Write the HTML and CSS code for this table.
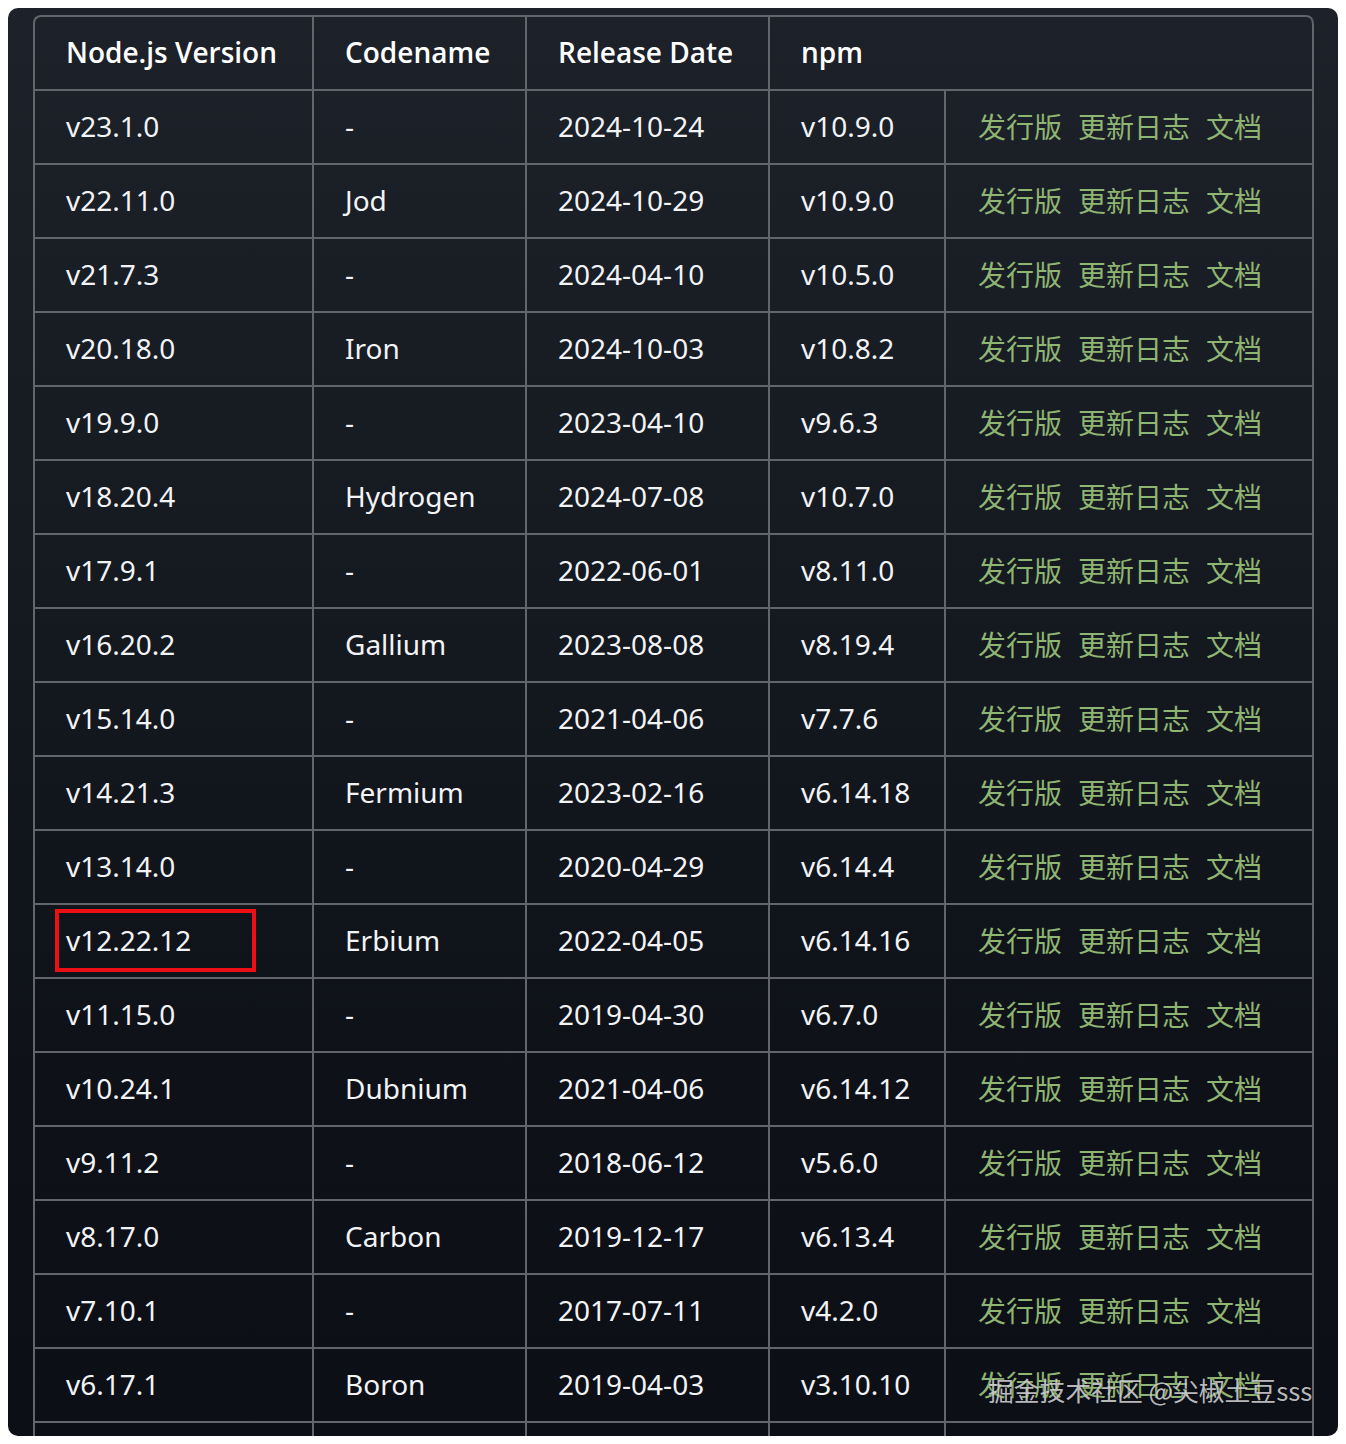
FILE: index.html
```html
<!DOCTYPE html>
<html lang="zh">
<head>
<meta charset="utf-8">
<title>Node.js Versions</title>
<link rel="stylesheet" href="styles.css">
</head>
<body>
<div class="frame">
  <table class="versions">
    <colgroup>
      <col class="c1"><col class="c2"><col class="c3"><col class="c4"><col class="c5">
    </colgroup>
    <thead>
      <tr><th>Node.js Version</th><th>Codename</th><th>Release Date</th><th colspan="2" class="last">npm</th></tr>
    </thead>
    <tbody>
      <tr><td>v23.1.0</td><td>-</td><td>2024-10-24</td><td>v10.9.0</td><td class="links"><a>发行版</a><a>更新日志</a><a>文档</a></td></tr>
      <tr><td>v22.11.0</td><td>Jod</td><td>2024-10-29</td><td>v10.9.0</td><td class="links"><a>发行版</a><a>更新日志</a><a>文档</a></td></tr>
      <tr><td>v21.7.3</td><td>-</td><td>2024-04-10</td><td>v10.5.0</td><td class="links"><a>发行版</a><a>更新日志</a><a>文档</a></td></tr>
      <tr><td>v20.18.0</td><td>Iron</td><td>2024-10-03</td><td>v10.8.2</td><td class="links"><a>发行版</a><a>更新日志</a><a>文档</a></td></tr>
      <tr><td>v19.9.0</td><td>-</td><td>2023-04-10</td><td>v9.6.3</td><td class="links"><a>发行版</a><a>更新日志</a><a>文档</a></td></tr>
      <tr><td>v18.20.4</td><td>Hydrogen</td><td>2024-07-08</td><td>v10.7.0</td><td class="links"><a>发行版</a><a>更新日志</a><a>文档</a></td></tr>
      <tr><td>v17.9.1</td><td>-</td><td>2022-06-01</td><td>v8.11.0</td><td class="links"><a>发行版</a><a>更新日志</a><a>文档</a></td></tr>
      <tr><td>v16.20.2</td><td>Gallium</td><td>2023-08-08</td><td>v8.19.4</td><td class="links"><a>发行版</a><a>更新日志</a><a>文档</a></td></tr>
      <tr><td>v15.14.0</td><td>-</td><td>2021-04-06</td><td>v7.7.6</td><td class="links"><a>发行版</a><a>更新日志</a><a>文档</a></td></tr>
      <tr><td>v14.21.3</td><td>Fermium</td><td>2023-02-16</td><td>v6.14.18</td><td class="links"><a>发行版</a><a>更新日志</a><a>文档</a></td></tr>
      <tr><td>v13.14.0</td><td>-</td><td>2020-04-29</td><td>v6.14.4</td><td class="links"><a>发行版</a><a>更新日志</a><a>文档</a></td></tr>
      <tr><td class="marked">v12.22.12<span class="redbox"></span></td><td>Erbium</td><td>2022-04-05</td><td>v6.14.16</td><td class="links"><a>发行版</a><a>更新日志</a><a>文档</a></td></tr>
      <tr><td>v11.15.0</td><td>-</td><td>2019-04-30</td><td>v6.7.0</td><td class="links"><a>发行版</a><a>更新日志</a><a>文档</a></td></tr>
      <tr><td>v10.24.1</td><td>Dubnium</td><td>2021-04-06</td><td>v6.14.12</td><td class="links"><a>发行版</a><a>更新日志</a><a>文档</a></td></tr>
      <tr><td>v9.11.2</td><td>-</td><td>2018-06-12</td><td>v5.6.0</td><td class="links"><a>发行版</a><a>更新日志</a><a>文档</a></td></tr>
      <tr><td>v8.17.0</td><td>Carbon</td><td>2019-12-17</td><td>v6.13.4</td><td class="links"><a>发行版</a><a>更新日志</a><a>文档</a></td></tr>
      <tr><td>v7.10.1</td><td>-</td><td>2017-07-11</td><td>v4.2.0</td><td class="links"><a>发行版</a><a>更新日志</a><a>文档</a></td></tr>
      <tr><td>v6.17.1</td><td>Boron</td><td>2019-04-03</td><td>v3.10.10</td><td class="links"><a>发行版</a><a>更新日志</a><a>文档</a></td></tr>
      <tr class="partial"><td></td><td></td><td></td><td></td><td></td></tr>
    </tbody>
  </table>
  <div class="watermark">掘金技术社区 @尖椒土豆sss</div>
</div>
</body>
</html>
```

FILE: styles.css
```css
html, body {
  margin: 0;
  padding: 0;
  background: #ffffff;
}

body {
  font-family: "Noto Sans", "Open Sans", "Noto Sans CJK SC", sans-serif;
}

.frame {
  position: relative;
  margin: 8px;
  width: 1330px;
  height: 1428px;
  box-sizing: border-box;
  padding: 7px 0 0 25px;
  border-radius: 10px;
  overflow: hidden;
  background: linear-gradient(180deg, #1d2129 0%, #151920 40%, #0e1118 75%, #0c0f16 100%);
}

.versions {
  border-collapse: separate;
  border-spacing: 0;
  table-layout: fixed;
  width: 1280px;
  border-top: 2px solid #62656c;
  border-left: 2px solid #62656c;
  border-radius: 8px 8px 0 0;
  color: #f2f3f5;
  font-size: 28px;
}

.c1 { width: 279px; }
.c2 { width: 213px; }
.c3 { width: 243px; }
.c4 { width: 176px; }
.c5 { width: 368px; }

.versions th,
.versions td {
  height: 72px;
  padding: 0 0 0 31px;
  border-right: 2px solid #62656c;
  border-bottom: 2px solid #62656c;
  text-align: left;
  vertical-align: middle;
  white-space: nowrap;
  line-height: 1.2;
}

.versions th {
  font-family: "Open Sans", "Noto Sans", sans-serif;
  font-weight: 600;
  color: #ffffff;
}

.versions th.last {
  border-top-right-radius: 7px;
}

.versions td.links {
  padding-left: 32px;
  font-family: "Noto Sans CJK SC", sans-serif;
  font-size: 28px;
}

.links a {
  color: #8fb573;
  margin-right: 16px;
  text-decoration: none;
}

.marked {
  position: relative;
}

.redbox {
  position: absolute;
  left: 20px;
  top: 4px;
  width: 201px;
  height: 63px;
  box-sizing: border-box;
  border: 4px solid #ec0f16;
}

.watermark {
  position: absolute;
  left: 980px;
  top: 1363px;
  font-family: "Noto Sans CJK SC", sans-serif;
  font-size: 25.8px;
  color: rgba(225, 225, 228, 0.82);
  text-shadow: 0 0 2px rgba(0, 0, 0, 0.5);
  white-space: nowrap;
}
```
